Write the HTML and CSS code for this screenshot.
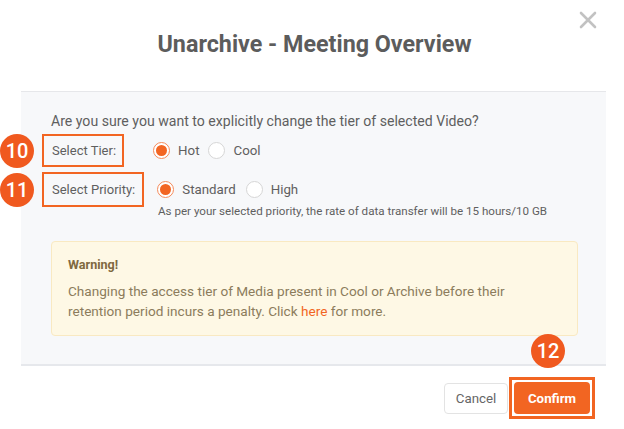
FILE: index.html
```html
<!DOCTYPE html>
<html lang="en">
<head>
  <meta charset="UTF-8">
  <meta name="viewport" content="width=device-width, initial-scale=1.0">
  <title>Unarchive - Meeting Overview</title>
  <link rel="stylesheet" href="styles.css">
</head>
<body>
  <div class="modal">
    <div class="modal-header">
      <h2 class="modal-title">Unarchive - Meeting Overview</h2>
      <button class="close-btn" aria-label="Close">
        <svg width="18" height="18" viewBox="0 0 18 18">
          <path d="M2 2 L16 16 M16 2 L2 16" stroke="#c2c2c2" stroke-width="2.6" stroke-linecap="round"/>
        </svg>
      </button>
    </div>

    <div class="modal-body">
      <p class="question">Are you sure you want to explicitly change the tier of selected Video?</p>

      <div class="field-row tier-row">
        <span class="badge badge-left">10</span>
        <div class="field-label">Select Tier:</div>
        <div class="radio-group">
          <label class="radio-item"><span class="radio checked"></span>Hot</label>
          <label class="radio-item"><span class="radio"></span>Cool</label>
        </div>
      </div>

      <div class="field-row priority-row">
        <span class="badge badge-left">11</span>
        <div class="field-label">Select Priority:</div>
        <div class="radio-group">
          <label class="radio-item"><span class="radio checked"></span>Standard</label>
          <label class="radio-item"><span class="radio"></span>High</label>
        </div>
      </div>
      <p class="priority-note">As per your selected priority, the rate of data transfer will be 15 hours/10 GB</p>

      <div class="warning-box">
        <div class="warning-title">Warning!</div>
        <p class="warning-text">Changing the access tier of Media present in Cool or Archive before their<br>retention period incurs a penalty. Click <a href="#">here</a> for more.</p>
      </div>
    </div>

    <div class="modal-footer">
      <button class="btn btn-cancel">Cancel</button>
      <div class="confirm-wrap">
        <span class="badge badge-top">12</span>
        <button class="btn btn-confirm">Confirm</button>
      </div>
    </div>
  </div>
</body>
</html>
```

FILE: styles.css
```css
* {
  box-sizing: border-box;
}
body {
  margin: 0;
  padding: 0;
  background: #fff;
  font-family: Roboto, "Liberation Sans", sans-serif;
  color: #5f5f5f;
}
.modal {
  position: relative;
  width: 624px;
  height: 429px;
  background: #fff;
}
.modal-header {
  height: 91px;
  padding-top: 31px;
  text-align: center;
}
.modal-title {
  margin: 0;
  font-size: 23.3px;
  line-height: 27px;
  font-weight: 700;
  color: #5c5c5c;
  padding-left: 5px;
}
.close-btn {
  position: absolute;
  top: 11px;
  right: 27px;
  width: 18px;
  height: 18px;
  padding: 0;
  border: none;
  background: none;
  cursor: pointer;
}
.close-btn svg {
  display: block;
}
.modal-body {
  margin: 0 18px 0 21px;
  height: 275px;
  padding: 20px 28px 0 30px;
  background: #f7f8fa;
  border-top: 1px solid #e6e7ea;
  border-bottom: 2px solid #e6e8ec;
}
.question {
  margin: 0;
  font-size: 14.1px;
  line-height: 18px;
}
.field-row {
  display: flex;
  align-items: center;
  position: relative;
}
.tier-row {
  margin-top: 4px;
}
.priority-row {
  margin-top: 5px;
}
.field-label {
  display: flex;
  align-items: center;
  margin-left: -9px;
  padding: 0 6px 0 8px;
  border: 2px solid #f26522;
  font-size: 13px;
  color: #5f5f5f;
}
.tier-row .field-label {
  height: 33px;
}
.priority-row .field-label {
  height: 35px;
  padding-right: 7px;
}
.radio-group {
  display: flex;
  align-items: center;
  gap: 9px;
}
.tier-row .radio-group {
  margin-left: 29px;
}
.priority-row .radio-group {
  margin-left: 13px;
  gap: 10px;
}
.radio-item {
  display: flex;
  align-items: center;
  gap: 8px;
  font-size: 13.3px;
  color: #5f5f5f;
  cursor: pointer;
}
.radio {
  position: relative;
  width: 17px;
  height: 17px;
  border-radius: 50%;
  border: 1px solid #d6d6d6;
  background: #fff;
}
.radio.checked {
  border-color: #f58a5a;
}
.radio.checked::after {
  content: "";
  position: absolute;
  top: 2px;
  left: 2px;
  width: 11px;
  height: 11px;
  border-radius: 50%;
  background: #f26522;
}
.priority-note {
  margin: -3px 0 0 107px;
  font-size: 11.6px;
  line-height: 14px;
  color: #5f5f5f;
}
.warning-box {
  margin-top: 23px;
  height: 95px;
  padding: 15px 16px 0;
  background: #fef8e5;
  border: 1px solid #f9e9c2;
  border-radius: 4px;
}
.warning-title {
  font-size: 12.6px;
  line-height: 16px;
  font-weight: 700;
  color: #80693f;
}
.warning-text {
  margin: 8px 0 0;
  font-size: 13.6px;
  line-height: 20px;
  color: #8c7c5c;
}
.warning-text a {
  color: #f26522;
  text-decoration: none;
}
.modal-footer {
  display: flex;
  justify-content: flex-end;
  align-items: center;
  padding: 11px 29px 0 0;
}
.btn {
  font-family: Roboto, "Liberation Sans", sans-serif;
  font-size: 13.3px;
  border-radius: 4px;
  cursor: pointer;
}
.btn-cancel {
  width: 64px;
  height: 31px;
  background: #fff;
  border: 1px solid #e3e3e3;
  color: #666;
}
.confirm-wrap {
  position: relative;
  margin-left: 1px;
  padding: 2px;
  border: 3px solid #f26522;
}
.btn-confirm {
  display: block;
  width: 76px;
  height: 32px;
  border: none;
  background: #f26522;
  color: #fff;
  font-weight: 700;
}
.badge {
  position: absolute;
  width: 34px;
  height: 34px;
  border-radius: 50%;
  background: #f0591f;
  color: #fff;
  font-size: 20px;
  font-weight: 500;
  line-height: 34px;
  text-align: center;
}
.badge-left {
  left: -51px;
  top: 50%;
  margin-top: -17px;
}
.badge-top {
  left: 19px;
  top: -46px;
}
```
